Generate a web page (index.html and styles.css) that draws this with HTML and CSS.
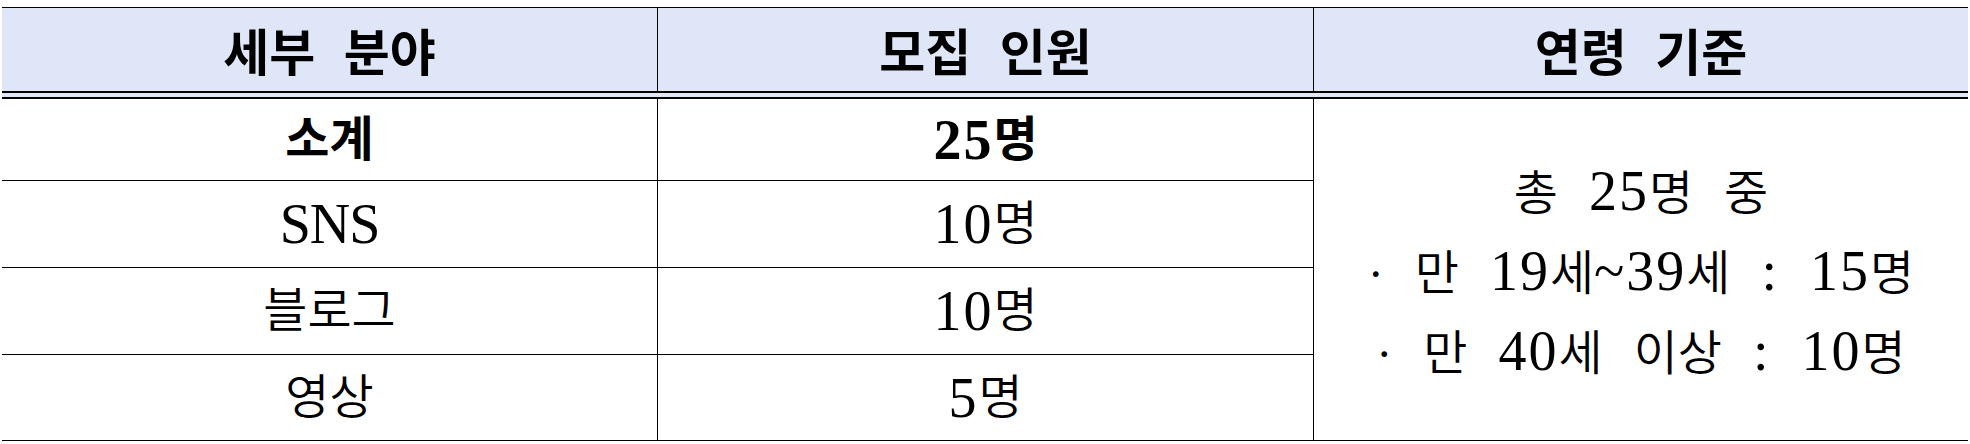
FILE: index.html
```html
<!DOCTYPE html>
<html>
<head>
<meta charset="utf-8">
<title>모집 인원</title>
<link rel="stylesheet" href="styles.css">
</head>
<body>
<div class="page">
  <div class="table">
    <div class="head">
      <div class="hcell sep">세부 분야</div>
      <div class="hcell sep">모집 인원</div>
      <div class="hcell">연령 기준</div>
    </div>
    <div class="rule"></div>
    <div class="body">
      <div class="cell sep bold">소계</div>
      <div class="cell sep bold"><span class="n">25</span>명</div>
      <div class="cell age">
        <div class="line">총 <span class="n">25</span>명 중</div>
        <div class="line">· 만 <span class="n">19</span>세<span class="n">~39</span>세 <span class="n">:</span> <span class="n">15</span>명</div>
        <div class="line">· 만 <span class="n">40</span>세 이상 <span class="n">:</span> <span class="n">10</span>명</div>
      </div>
      <div class="cell sep"><span class="n sns">SNS</span></div>
      <div class="cell sep"><span class="n">10</span>명</div>
      <div class="cell sep">블로그</div>
      <div class="cell sep"><span class="n">10</span>명</div>
      <div class="cell sep">영상</div>
      <div class="cell sep"><span class="n">5</span>명</div>
    </div>
  </div>
</div>
</body>
</html>
```

FILE: styles.css
```css
* { box-sizing: border-box; }
html, body { margin: 0; padding: 0; background: #fff; }
.page {
  padding: 7px 2px 0 2px;
  width: 1970px;
}
.table {
  width: 1966px;
  color: #000;
}
.head {
  display: grid;
  grid-template-columns: 656px 656px 654px;
  height: 84px;
  border-top: 1px solid #000;
  background: #dfe6f7;
}
.hcell {
  display: flex;
  align-items: center;
  justify-content: center;
  font-family: "Noto Sans CJK KR", sans-serif;
  font-weight: 700;
  font-size: 50px;
  line-height: 60px;
  word-spacing: 17px;
  padding-bottom: 2px;
}
.sep { border-right: 1px solid #000; }
.rule {
  height: 8px;
  border-top: 2px solid #000;
  border-bottom: 2px solid #000;
  background: #dfe6f7;
}
.body {
  display: grid;
  grid-template-columns: 656px 656px 654px;
  grid-template-rows: 82px 87px 87px 86px;
}
.cell {
  display: flex;
  align-items: center;
  justify-content: center;
  border-bottom: 1px solid #000;
  font-family: "Liberation Serif", "Times New Roman", "Noto Sans CJK KR", serif;
  font-weight: 350;
  font-size: 48px;
  line-height: 60px;
  word-spacing: 19px;
}
.bold { font-weight: 700; }
.n {
  font-family: "Liberation Serif", "Times New Roman", "DejaVu Serif", serif;
  font-size: 56px;
  letter-spacing: 2px;
}
.sns { letter-spacing: -1px; }
.age {
  grid-column: 3;
  grid-row: 1 / 5;
  flex-direction: column;
  padding-top: 2px;
}
.line {
  height: 80px;
  line-height: 80px;
  text-align: center;
  white-space: nowrap;
}
```
